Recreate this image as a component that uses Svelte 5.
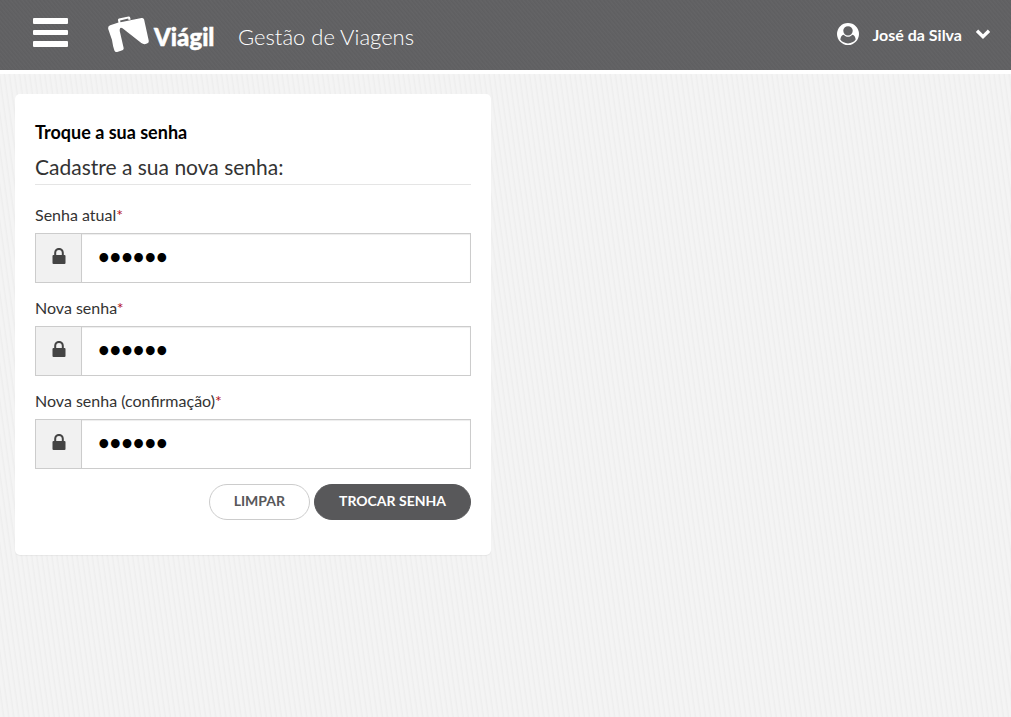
<script>
  const initial = '123456';

  let fields = [
    { id: 'senha-atual', label: 'Senha atual', value: initial },
    { id: 'nova-senha', label: 'Nova senha', value: initial },
    { id: 'confirmacao', label: 'Nova senha (confirmação)', value: initial }
  ];

  function clearFields() {
    fields = fields.map(f => ({ ...f, value: '' }));
  }
</script>

<header class="topbar">
  <button class="menu" type="button" aria-label="Menu">
    <svg width="35" height="30" viewBox="0 0 35 30">
      <rect x="0" y="0" width="35" height="6" rx="1" />
      <rect x="0" y="12" width="35" height="5" rx="1" />
      <rect x="0" y="23" width="35" height="6" rx="1" />
    </svg>
  </button>

  <a class="logo" href="#inicio" aria-label="Viágil">
    <svg width="108" height="40" viewBox="0 0 108 40">
      <!-- suitcase -->
      <path d="M10.500 6.500 L10 4.300 Q9.800 3 11 2.600 L20.500 0.500 Q21.800 0.200 22.100 1.500 L22.700 3.500 L20.600 4 L20.200 2.500 L12.100 4.500 L12.500 6.200 L33.500 2 Q35.600 1.500 36.100 3.600 L40.700 24.500 Q41.200 26.800 39 27.600 L37.500 28 Q35.500 28.600 33.300 27 L14.500 12.300 Q12.200 11 11.800 13.300 Q11.500 15 12.200 17 L15.600 31.700 Q16 33.600 14.400 34.200 L9.200 35.900 Q7.200 36.500 6.400 34.500 Q4.800 30 4 24 L0.300 13.200 Q-0.500 10.200 2.200 9.200 Z" />
      <text x="46" y="30">Viágil</text>
    </svg>
  </a>

  <span class="product">Gestão de Viagens</span>

  <button class="user" type="button">
    <svg width="22" height="22" viewBox="0 0 1792 1792">
      <path fill-rule="evenodd" d="M1523 1339q-22-155-87.500-257.500t-184.500-118.500q-67 74-159.500 115.500t-195.500 41.500-195.500-41.500-159.500-115.500q-119 16-184.500 118.500t-87.500 257.500q106 150 271 237.500t356 87.500 356-87.500 271-237.500zM1280 640q0-159-112.500-271.500t-271.500-112.500-271.500 112.500-112.500 271.500 112.500 271.500 271.500 112.500 271.500-112.500 112.500-271.500zM1792 896q0 182-71 347.500t-190.500 286-285.500 191.500-349 71q-182 0-348-71t-286-191-191-286-71-348 71-348 191-286 286-191 348-71 348 71 286 191 191 286 71 348z" />
    </svg>
    <span>José da Silva</span>
    <svg width="16" height="10" viewBox="0 0 16 10">
      <path d="M2 1.800 L8 7.600 L14 1.800" fill="none" stroke="#fff" stroke-width="3.400" />
    </svg>
  </button>
</header>

<main>
  <section class="card">
    <h1>Troque a sua senha</h1>
    <form on:submit|preventDefault>
      <h2>Cadastre a sua nova senha:</h2>
      {#each fields as field (field.id)}
        <div class="field">
          <label for={field.id}>{field.label}<span class="required">*</span></label>
          <div class="group">
            <span class="addon">
              <svg width="14" height="16" viewBox="0 0 14 16">
                <path d="M3.200 8 V4.800 A3.800 3.900 0 0 1 10.800 4.800 V8" fill="none" stroke="#444" stroke-width="2" />
                <rect x="0.500" y="7" width="13" height="9" rx="1" fill="#444" />
              </svg>
            </span>
            <input id={field.id} type="password" autocomplete="off" bind:value={field.value} />
          </div>
        </div>
      {/each}
      <div class="actions">
        <button class="btn" type="button" on:click={clearFields}>LIMPAR</button>
        <button class="btn primary" type="submit">TROCAR SENHA</button>
      </div>
    </form>
  </section>
</main>

<style>
  :global(body) {
    background: #f4f4f4 repeating-linear-gradient(82deg, #f4f4f4 0, #f4f4f4 2px, #eeeeee 4px, #f4f4f4 5px);
    min-height: 100vh;
    color: #333;
    font-family: Lato, sans-serif;
    font-size: 16px;
  }
  .topbar {
    display: flex;
    align-items: flex-start;
    box-sizing: border-box;
    height: 74px;
    padding: 0 20px 0 33px;
    background: repeating-linear-gradient(50deg, #5f5f61 0, #646466 2px, #5f5f61 3px);
    border-bottom: 4px solid #fff;
    color: #fff;
  }
  .topbar svg {
    display: block;
    fill: #fff;
  }
  button {
    font-family: inherit;
    cursor: pointer;
  }
  .menu,
  .user {
    padding: 0;
    border: 0;
    background: none;
    color: #fff;
  }
  .menu {
    margin-top: 18px;
  }
  .logo {
    margin: 16px 0 0 40px;
  }
  .logo text {
    font-family: Lato, sans-serif;
    font-size: 24px;
    font-weight: 900;
    stroke: #fff;
    stroke-width: 0.500;
  }
  .product {
    margin-left: 22px;
    font-size: 22px;
    font-weight: 300;
    line-height: 74px;
  }
  .user {
    display: flex;
    align-items: center;
    gap: 13px;
    margin-left: auto;
    height: 68px;
    font-size: 16px;
    font-weight: 700;
  }
  main {
    padding: 20px 15px;
  }
  .card {
    box-sizing: border-box;
    width: 50%;
    max-width: 476px;
    padding: 28px 20px 35px;
    background: #fff;
    border-radius: 5px;
    box-shadow: 0 1px 1px rgba(0, 0, 0, 0.05);
  }
  h1 {
    margin: 0 0 10px;
    color: #000;
    font-size: 18px;
    font-weight: 700;
    line-height: 20px;
  }
  h2 {
    margin: 0 0 20px;
    padding-bottom: 2px;
    border-bottom: 1px solid #e5e5e5;
    font-size: 21px;
    font-weight: 400;
    line-height: 30px;
  }
  .field {
    margin-bottom: 15px;
  }
  label {
    display: block;
    margin-bottom: 8px;
    line-height: 20px;
  }
  .required {
    color: #b5121b;
  }
  .group {
    display: flex;
    box-sizing: border-box;
    height: 50px;
    border: 1px solid #ccc;
  }
  .addon {
    display: flex;
    align-items: center;
    justify-content: center;
    width: 45px;
    padding-bottom: 4px;
    background: #f1f1f1;
    border-right: 1px solid #ccc;
  }
  input {
    flex: 1;
    min-width: 0;
    padding: 0 16px 4px;
    border: 0;
    outline: 0;
    background: #fff;
    box-shadow: inset 0 1px 1px rgba(0, 0, 0, 0.075);
    color: #000;
    font-family: Lato, sans-serif;
    font-size: 20px;
    font-weight: 700;
  }
  .actions {
    display: flex;
    justify-content: flex-end;
    gap: 4px;
  }
  .btn {
    height: 36px;
    padding: 0 24px 3px;
    border: 1px solid #ccc;
    border-radius: 18px;
    background: #fff;
    color: #58585a;
    font-size: 14px;
    font-weight: 700;
  }
  .primary {
    border-color: #58585a;
    background: #58585a;
    color: #fff;
  }
</style>
